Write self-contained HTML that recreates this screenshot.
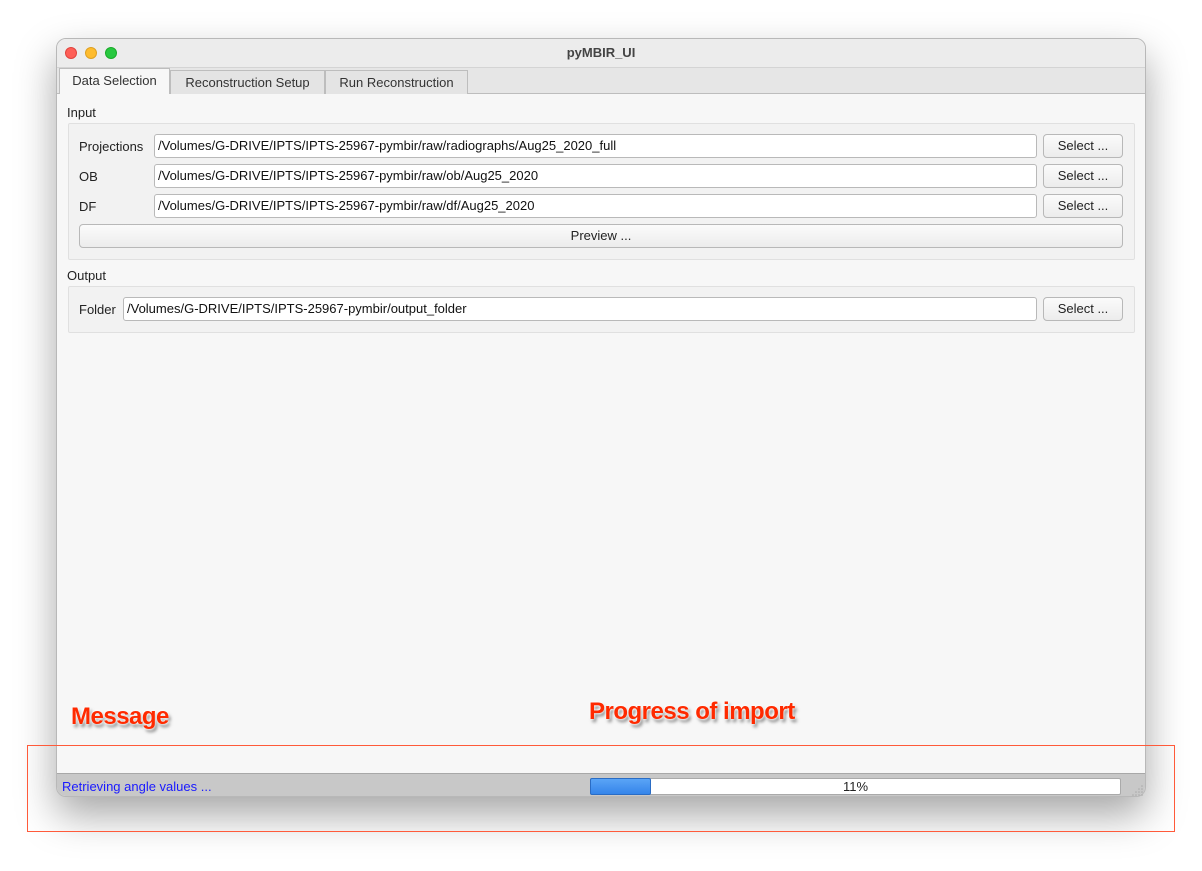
<!DOCTYPE html>
<html><head><meta charset="utf-8"><style>
*{box-sizing:border-box;margin:0;padding:0}
body{width:1202px;height:871px;background:#fff;position:relative;overflow:hidden;font-family:"Liberation Sans",sans-serif;font-size:13px;color:#222}
.a{position:absolute}
.win{left:56px;top:38px;width:1090px;height:759px;background:#f7f7f7;border:1px solid #b8b8b8;border-radius:10px;overflow:hidden;box-shadow:0 18px 40px rgba(0,0,0,.35)}
.title{left:0;top:0;width:100%;height:29px;background:#ececec;border-bottom:1px solid #d4d4d4;text-align:center;line-height:28px;font-weight:bold;font-size:13px;color:#444}
.dot{top:8px;width:12px;height:12px;border-radius:50%}
.tabbar{left:0;top:29px;width:100%;height:25px;background:#e6e6e6}
.tab{top:31px;height:24px;border:1px solid #bdbdbd;border-bottom:none;background:#e4e4e4;line-height:23px;text-align:center;font-size:13px;color:#333}
.pane{left:0;top:54px;width:1088px;height:681px;background:#f7f7f7;border-top:1px solid #bdbdbd}
.grp{border:1px solid #e0e0e0;background:#f2f2f2;border-radius:2px}
.fld{height:24px;background:#fff;border:1px solid #b9b9b9;border-radius:3px;line-height:22px;padding-left:3px;font-size:13px;color:#111}
.btn{height:24px;background:linear-gradient(#fbfbfb,#ececec);border:1px solid #b8b8b8;border-radius:4px;text-align:center;line-height:22px;font-size:13px;color:#222}
.lbl{font-size:13px;color:#222}
.ann{color:#ff2a00;font-weight:bold;font-size:24px;letter-spacing:-0.5px;text-shadow:0 0 2px #fff,0 0 3px #fff,2px 3px 3px rgba(0,0,0,.5)}
</style></head><body>
<div class="a win">
 <div class="a title">pyMBIR_UI</div>
 <div class="a dot" style="left:8px;background:#fe5f57;border:1px solid #e0443e"></div>
 <div class="a dot" style="left:28px;background:#febc2e;border:1px solid #dea123"></div>
 <div class="a dot" style="left:48px;background:#28c840;border:1px solid #1aab29"></div>
 <div class="a tabbar"></div>
 <div class="a pane"></div>
 <div class="a tab" style="left:2px;width:111px;top:29px;height:26px;background:#f7f7f7;z-index:2">Data Selection</div>
 <div class="a tab" style="left:113px;width:155px">Reconstruction Setup</div>
 <div class="a tab" style="left:268px;width:143px">Run Reconstruction</div>
 <div class="a" style="left:0;top:734px;width:100%;height:25px;background:#c8c8c8;border-top:1px solid #a8a8a8"></div>
</div>
<div class="a lbl" style="left:67px;top:105px">Input</div>
<div class="a grp" style="left:68px;top:123px;width:1067px;height:137px"></div>
<div class="a lbl" style="left:79px;top:139px">Projections</div>
<div class="a lbl" style="left:79px;top:169px">OB</div>
<div class="a lbl" style="left:79px;top:199px">DF</div>
<div class="a fld" style="left:154px;top:134px;width:883px">/Volumes/G-DRIVE/IPTS/IPTS-25967-pymbir/raw/radiographs/Aug25_2020_full</div>
<div class="a fld" style="left:154px;top:164px;width:883px">/Volumes/G-DRIVE/IPTS/IPTS-25967-pymbir/raw/ob/Aug25_2020</div>
<div class="a fld" style="left:154px;top:194px;width:883px">/Volumes/G-DRIVE/IPTS/IPTS-25967-pymbir/raw/df/Aug25_2020</div>
<div class="a btn" style="left:1043px;top:134px;width:80px">Select ...</div>
<div class="a btn" style="left:1043px;top:164px;width:80px">Select ...</div>
<div class="a btn" style="left:1043px;top:194px;width:80px">Select ...</div>
<div class="a btn" style="left:79px;top:224px;width:1044px">Preview ...</div>
<div class="a lbl" style="left:67px;top:268px">Output</div>
<div class="a grp" style="left:68px;top:286px;width:1067px;height:47px"></div>
<div class="a lbl" style="left:79px;top:302px">Folder</div>
<div class="a fld" style="left:123px;top:297px;width:914px">/Volumes/G-DRIVE/IPTS/IPTS-25967-pymbir/output_folder</div>
<div class="a btn" style="left:1043px;top:297px;width:80px">Select ...</div>
<div class="a" style="left:62px;top:779px;font-size:13px;color:#1a1aff">Retrieving angle values ...</div>
<div class="a" style="left:590px;top:778px;width:531px;height:17px;background:#fff;border:1px solid #aaa;border-radius:2px;text-align:center;line-height:15px;font-size:13px;color:#222">11%</div>
<div class="a" style="left:590px;top:778px;width:61px;height:17px;background:linear-gradient(#5aa4f6,#3585ea);border:1px solid #2a6cc4;border-radius:2px"></div>
<svg class="a" style="left:1132px;top:784px" width="12" height="12"><g fill="#aaa"><circle cx="10" cy="2" r=".8"/><circle cx="7" cy="5" r=".8"/><circle cx="10" cy="5" r=".8"/><circle cx="4" cy="8" r=".8"/><circle cx="7" cy="8" r=".8"/><circle cx="10" cy="8" r=".8"/><circle cx="1" cy="11" r=".8"/><circle cx="4" cy="11" r=".8"/><circle cx="7" cy="11" r=".8"/><circle cx="10" cy="11" r=".8"/></g></svg>
<div class="a ann" style="left:71px;top:703px">Message</div>
<div class="a ann" style="left:589px;top:698px">Progress of import</div>
<div class="a" style="left:27px;top:745px;width:1148px;height:87px;border:1.5px solid #ff5a3a"></div>
</body></html>
